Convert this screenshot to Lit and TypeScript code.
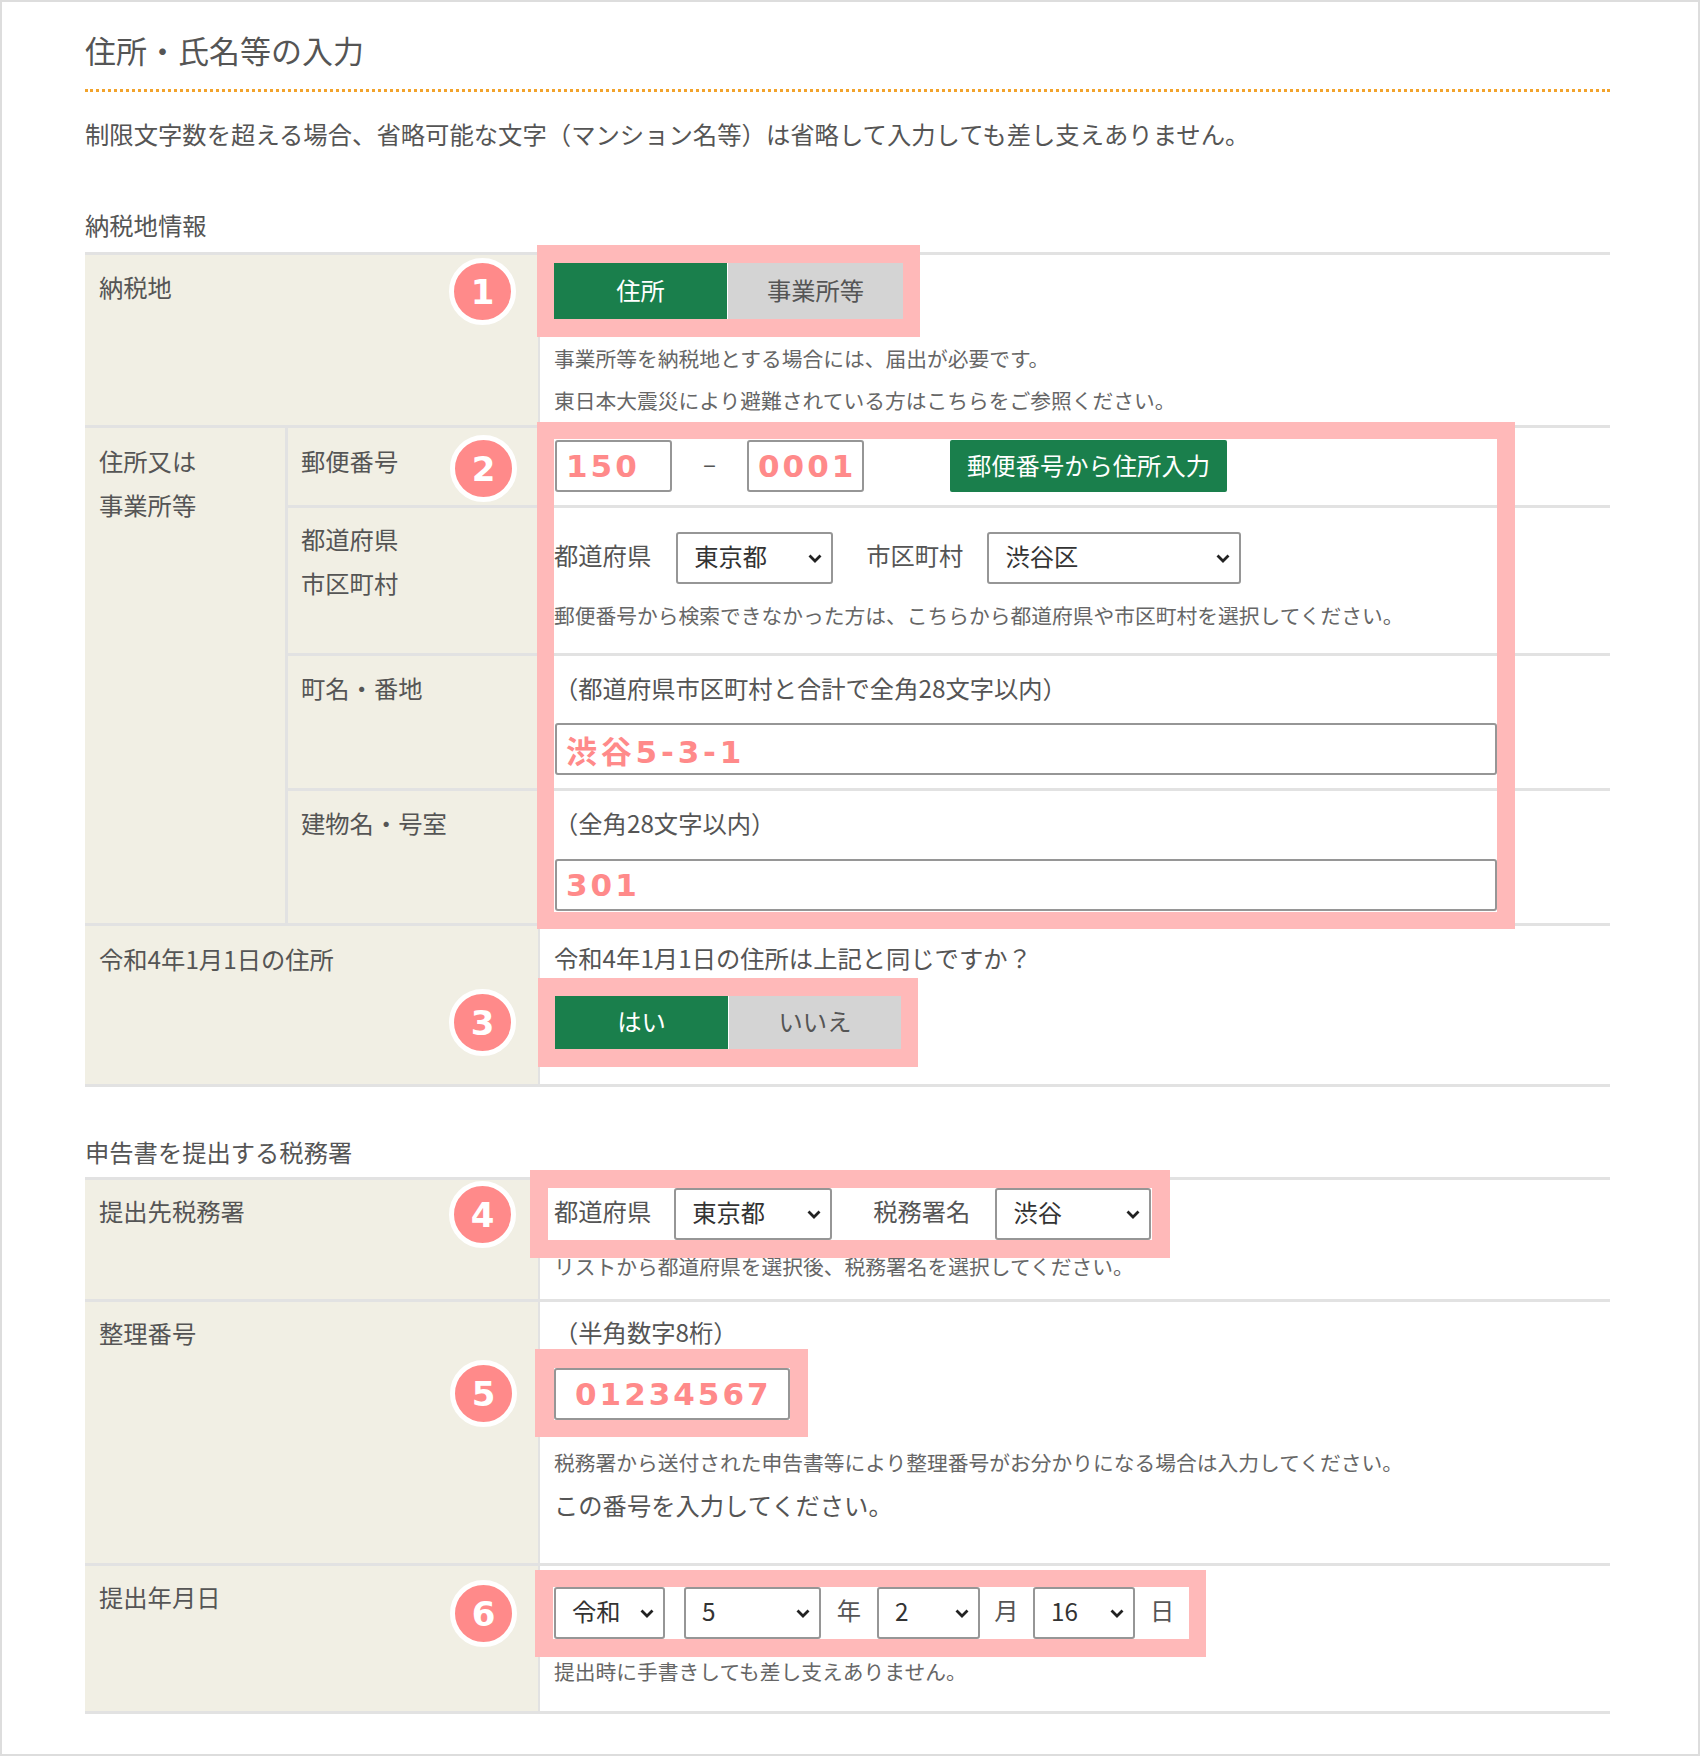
import { LitElement, html, css } from "lit";
import { customElement } from "lit/decorators.js";

const frames = [
  { x: 537, y: 245, w: 383, h: 92, b: "18px 17px" },
  { x: 537, y: 422, w: 978, h: 507, b: "17px 18px 17px 17px" },
  { x: 538, y: 978, w: 380, h: 89, b: "18px 17px" },
  { x: 530, y: 1170, w: 640, h: 88, b: "18px" },
  { x: 535, y: 1349, w: 273, h: 88, b: "19px 18px 17px 19px" },
  { x: 535, y: 1570, w: 671, h: 87, b: "17px 17px 18px 18px" },
];
const badges = [
  { n: 1, x: 482, y: 291 },
  { n: 2, x: 483, y: 468 },
  { n: 3, x: 482, y: 1022 },
  { n: 4, x: 482, y: 1214 },
  { n: 5, x: 483, y: 1393 },
  { n: 6, x: 483, y: 1613 },
];

@customElement("app-root")
export class AppRoot extends LitElement {
  static styles = css`
    :host { display: block; width: 1700px; height: 1756px; position: relative; overflow: hidden;
      font-family: "Noto Sans CJK JP", "Noto Sans", sans-serif; color: #555; font-size: 24.3px; line-height: 44px; background: #fff; }
    * { box-sizing: border-box; }
    .page { height: 1756px; border: 2px solid #ddd; padding: 0 88px 0 83px; }
    h1 { margin: 0; padding: 26px 0 17px; font-size: 31px; font-weight: 400; line-height: 44px; border-bottom: 3px dotted #f2a32c; }
    .intro { margin: 20px 0 0; white-space: nowrap; font-size: 24.35px; }
    h2 { margin: 47px 0 5px; font-size: 24.3px; font-weight: 400; line-height: 44px; }
    h2.second { margin: 43px 0 3px; }
    .table { display: grid; grid-template-columns: 200px 253px 1fr; border-bottom: 3px solid #e2e2e2; }
    .t1 { grid-template-rows: 173px 80px 148px 135px 135px 161px; }
    .t2 { grid-template-rows: 122px 264px 148px; }
    .cell { border-top: 3px solid #e2e2e2; }
    .lab { background: #f1efe4; padding: 11px 0 0 14px; }
    .wide { grid-column: 1 / span 2; }
    .tall { grid-row: span 4; }
    .sub { background: #f1efe4; padding: 11px 0 0 13px; border-left: 3px solid #e2e2e2; }
    .lab.up1, .sub.up1 { padding-top: 10px; }
    .lab.up2, .sub.up2 { padding-top: 9px; }
    .val { padding: 0 0 0 14px; border-left: 2px solid #e2e2e2; display: flex; flex-direction: column; align-items: flex-start; }
    .note { font-size: 20.75px; line-height: 41px; color: #666; white-space: nowrap; }
    .text { line-height: 44px; white-space: nowrap; }
    .pt8 { padding-top: 8px; } .pt10 { padding-top: 10px; } .pt12 { padding-top: 12px; }
    .pt21 { padding-top: 21px; } .pt24 { padding-top: 24px; }
    .m0 { margin-top: 0; } .m1 { margin-top: 1px; } .m6 { margin-top: 6px; } .m11 { margin-top: 11px; } .m12 { margin-top: 12px; } .m13 { margin-top: 13px; } .m14 { margin-top: 14px; }
    .m16 { margin-top: 16px; } .m19 { margin-top: 19px; } .m22 { margin-top: 22px; }
    .toggle { display: flex; height: 56px; }
    .toggle.short { height: 53px; margin-left: 1px; }
    .toggle div { display: flex; align-items: center; justify-content: center; padding-bottom: 3px; }
    .on { width: 173px; background: #1a7f4c; color: #fff; }
    .off { width: 175px; background: #d4d4d4; color: #555; margin-left: 1px; }
    .short .off { width: 172px; }
    input, select { height: 52px; border: 2px solid #969696; border-radius: 3px; background-color: #fff; font-family: inherit; outline: none; flex: none; }
    select { font-size: 24.3px; color: #333; padding: 0 28px 5px 16px; appearance: none; -webkit-appearance: none;
      background-image: url("data:image/svg+xml,%3Csvg xmlns='http://www.w3.org/2000/svg' width='14' height='9' viewBox='0 0 14 9'%3E%3Cpath d='M1.5 1.5 7 7l5.5-5.5' fill='none' stroke='%23222' stroke-width='2.8'/%3E%3C/svg%3E");
      background-repeat: no-repeat; background-size: 14px 9px; background-position: right 9px center; }
    input { font-family: "DejaVu Sans", sans-serif; font-weight: 700; color: #ff8a8a; font-size: 31px; letter-spacing: 3px; padding: 0 0 0 9px; }
    input.jp { font-family: "DejaVu Sans", "Noto Sans CJK JP", sans-serif; letter-spacing: 3.8px; }
    .row { display: flex; align-items: center; }
    .row span { padding-bottom: 6px; }
    .zip { width: 117px; }
    .first { margin-left: 1px; }
    .dash { width: 75px; text-align: center; }
    .go { margin-left: 86px; width: 277px; height: 52px; background: #1a7f4c; color: #fff; border-radius: 2px; display: flex; align-items: center; justify-content: center; padding-bottom: 3px; }
    .full { width: 942px; }
    .num { width: 236px; padding-left: 19px; }
    .s157 { width: 157px; } .s254 { width: 254px; } .s158 { width: 158px; } .s156 { width: 156px; } .s111 { width: 111px; } .s137 { width: 137px; } .s103 { width: 103px; } .s102 { width: 102px; }
    .ml23 { margin-left: 23px; } .ml24 { margin-left: 24px; } .ml25 { margin-left: 25px; } .ml33 { margin-left: 33px; } .ml41 { margin-left: 41px; }
    .ml19 { margin-left: 19px; } .unit { width: 56px; text-align: center; } .unit.n { width: 53px; } .end { margin-left: 15px; }
    .frame { position: absolute; border-style: solid; border-color: #ffb9b9; }
    .badge { position: absolute; width: 67px; height: 67px; border-radius: 50%; border: 5px solid #fff; background: #ff8a8a; color: #fff;
      display: flex; align-items: center; justify-content: center; font-family: "DejaVu Sans", sans-serif; font-weight: 700; font-size: 34px; line-height: 1; }
  `;

  render() {
    return html`
      <div class="page">
        <h1>住所・氏名等の入力</h1>
        <p class="intro">制限文字数を超える場合、省略可能な文字（マンション名等）は省略して入力しても差し支えありません。</p>
        <h2>納税地情報</h2>
        <div class="table t1">
          <div class="cell lab wide up1">納税地</div>
          <div class="cell val pt8">
            <div class="toggle"><div class="on">住所</div><div class="off">事業所等</div></div>
            <div class="note m19">事業所等を納税地とする場合には、届出が必要です。</div>
            <div class="note m1">東日本大震災により避難されている方はこちらをご参照ください。</div>
          </div>

          <div class="cell lab tall">住所又は<br />事業所等</div>
          <div class="cell sub">郵便番号</div>
          <div class="cell val pt12">
            <div class="row">
              <input class="zip first" value="150" /><span class="dash">–</span><input class="zip" value="0001" />
              <div class="go">郵便番号から住所入力</div>
            </div>
          </div>

          <div class="cell sub up2">都道府県<br />市区町村</div>
          <div class="cell val pt24">
            <div class="row">
              <span>都道府県</span>
              <select class="s157 ml25"><option>東京都</option></select>
              <span class="ml33">市区町村</span>
              <select class="s254 ml24"><option>渋谷区</option></select>
            </div>
            <div class="note m11">郵便番号から検索できなかった方は、こちらから都道府県や市区町村を選択してください。</div>
          </div>

          <div class="cell sub up1">町名・番地</div>
          <div class="cell val pt10">
            <div class="text">（都道府県市区町村と合計で全角28文字以内）</div>
            <input class="full jp first m13" value="渋谷5-3-1" />
          </div>

          <div class="cell sub up1">建物名・号室</div>
          <div class="cell val pt10">
            <div class="text">（全角28文字以内）</div>
            <input class="full first m14" value="301" />
          </div>

          <div class="cell lab wide">令和4年1月1日の住所</div>
          <div class="cell val pt10">
            <div class="text">令和4年1月1日の住所は上記と同じですか？</div>
            <div class="toggle short m16"><div class="on">はい</div><div class="off">いいえ</div></div>
          </div>
        </div>

        <h2 class="second">申告書を提出する税務署</h2>
        <div class="table t2">
          <div class="cell lab wide up2">提出先税務署</div>
          <div class="cell val pt8">
            <div class="row">
              <span>都道府県</span>
              <select class="s158 ml23"><option>東京都</option></select>
              <span class="ml41">税務署名</span>
              <select class="s156 ml25"><option>渋谷</option></select>
            </div>
            <div class="note m6">リストから都道府県を選択後、税務署名を選択してください。</div>
          </div>

          <div class="cell lab wide up2">整理番号</div>
          <div class="cell val pt8">
            <div class="text">（半角数字8桁）</div>
            <input class="num m14" value="01234567" />
            <div class="note m22">税務署から送付された申告書等により整理番号がお分かりになる場合は入力してください。</div>
            <div class="text m0">この番号を入力してください。</div>
          </div>

          <div class="cell lab wide up2">提出年月日</div>
          <div class="cell val pt21">
            <div class="row">
              <select class="s111"><option>令和</option></select>
              <select class="s137 ml19"><option>5</option></select>
              <span class="unit">年</span>
              <select class="s103"><option>2</option></select>
              <span class="unit n">月</span>
              <select class="s102"><option>16</option></select>
              <span class="end">日</span>
            </div>
            <div class="note m12">提出時に手書きしても差し支えありません。</div>
          </div>
        </div>
      </div>
      ${frames.map(
        (f) => html`<div class="frame" style="left:${f.x}px;top:${f.y}px;width:${f.w}px;height:${f.h}px;border-width:${f.b}"></div>`
      )}
      ${badges.map(
        (b) => html`<div class="badge" style="left:${b.x - 33}px;top:${b.y - 33}px">${b.n}</div>`
      )}
    `;
  }
}
